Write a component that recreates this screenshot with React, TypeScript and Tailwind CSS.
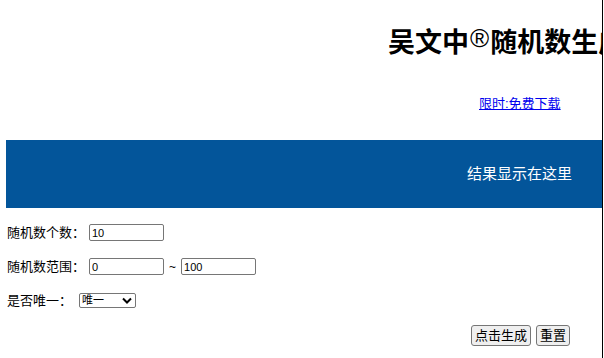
export default function App() {
  return (
    <div className="w-[604px] h-[358px] bg-white overflow-hidden flex">
      <div
        className="w-[603px] shrink-0 h-full border-r border-black overflow-hidden text-black"
        style={{ fontFamily: '"Liberation Sans", "Noto Sans CJK SC", sans-serif' }}
      >
        <h1 className="mt-[28px] pl-[388px] h-[30px] leading-[30px] text-[27px] font-bold whitespace-nowrap flex items-start">
          <span>吴文中</span>
          <span className="text-[26px] font-normal leading-[26px] mt-[-3px] mx-[1px]">®</span>
          <span>随机数生成器</span>
        </h1>

        <div className="mt-[38px] pl-[479px] h-[16px] leading-[16px] text-[13px]">
          <a href="#" className="text-[#0000ee] underline">
            限时:免费下载
          </a>
        </div>

        <div className="mt-[28px] ml-[6px] h-[68px] bg-[#03559a] flex items-center pl-[461px] text-white text-[15px] whitespace-nowrap">
          结果显示在这里
        </div>

        <div className="pl-[7px] text-[13px]">
          <div className="mt-[16px] flex items-center h-[17px]">
            <span className="w-[82px]">随机数个数：</span>
            <input
              defaultValue="10"
              className="w-[75px] h-[17px] border border-[#767676] rounded-[2px] px-[2px] text-[11px] outline-none"
            />
          </div>

          <div className="mt-[17px] flex items-center h-[17px]">
            <span className="w-[82px]">随机数范围：</span>
            <input
              defaultValue="0"
              className="w-[75px] h-[17px] border border-[#767676] rounded-[2px] px-[2px] text-[11px] outline-none"
            />
            <span className="mx-[5px] text-[12px]">~</span>
            <input
              defaultValue="100"
              className="w-[75px] h-[17px] border border-[#767676] rounded-[2px] px-[2px] text-[11px] outline-none"
            />
          </div>

          <div className="mt-[18px] flex items-center h-[15px]">
            <span className="w-[72px]">是否唯一：</span>
            <div className="w-[57px] h-[15px] border border-[#767676] rounded-[2px] flex items-center justify-between pl-[2px] pr-[3px]">
              <select className="appearance-none bg-transparent text-[11px] leading-[13px] outline-none w-[36px]">
                <option>唯一</option>
                <option>不唯一</option>
              </select>
              <svg width="10" height="7" viewBox="0 0 10 7">
                <path d="M1 1.5 L5 5.5 L9 1.5" fill="none" stroke="#000" strokeWidth="2" />
              </svg>
            </div>
          </div>
        </div>

        <div className="mt-[17px] pl-[471px] flex gap-[5px]">
          <button className="h-[21px] px-[3px] text-[13px] leading-[19px] bg-[#efefef] border border-[#767676] rounded-[3px]">
            点击生成
          </button>
          <button className="h-[21px] px-[3px] text-[13px] leading-[19px] bg-[#efefef] border border-[#767676] rounded-[3px]">
            重置
          </button>
        </div>
      </div>
    </div>
  );
}
